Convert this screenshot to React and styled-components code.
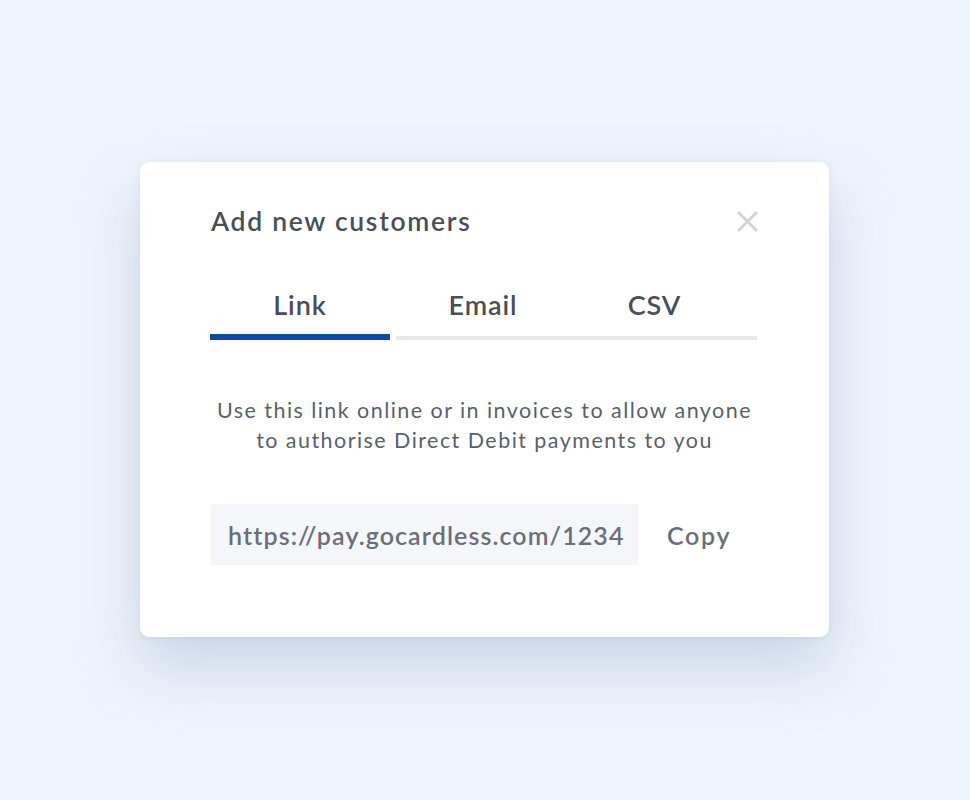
import React, { useState } from "react";
import styled, { createGlobalStyle } from "styled-components";

const Global = createGlobalStyle`
  html, body { margin: 0; padding: 0; }
  body {
    background: #eef4fc;
    font-family: Lato, "Open Sans", sans-serif;
    -webkit-font-smoothing: antialiased;
  }
`;

const Page = styled.div`
  width: 970px;
  height: 800px;
  box-sizing: border-box;
  padding-top: 162px;
  padding-left: 140px;
`;

const Card = styled.div`
  width: 689px;
  height: 475px;
  box-sizing: border-box;
  background: #ffffff;
  border-radius: 9px;
  box-shadow: 0 30px 60px rgba(160, 175, 205, 0.45), 0 2px 6px rgba(170, 180, 200, 0.2);
  padding: 42px 71px 0 71px;
  display: flex;
  flex-direction: column;
`;

const Header = styled.div`
  display: flex;
  align-items: center;
  justify-content: space-between;
  height: 34px;
`;

const Title = styled.h2`
  margin: 0;
  font-size: 26.5px;
  font-weight: 600;
  color: #4a4f57;
  letter-spacing: 1.7px;
`;

const Close = styled.button`
  border: 0;
  background: none;
  padding: 0;
  width: 21px;
  height: 21px;
  margin-right: 0;
  display: flex;
  cursor: pointer;
`;

const Tabs = styled.div`
  display: flex;
  align-items: flex-end;
  margin-top: 50px;
  margin-left: -1px;
`;

const Tab = styled.button`
  border: 0;
  background: none;
  font-family: inherit;
  font-size: 27px;
  line-height: 34px;
  font-weight: 600;
  letter-spacing: 0.9px;
  color: #4a4f57;
  width: ${(p) => p.$w}px;
  margin-left: ${(p) => p.$ml || 0}px;
  padding: 0 ${(p) => p.$pr || 0}px ${(p) => (p.$active ? 12 : 14)}px 0;
  box-sizing: content-box;
  border-bottom: ${(p) => (p.$active ? "6px solid #0a4ca8" : "4px solid #e6e7ec")};
  text-align: center;
  cursor: pointer;
`;

const Description = styled.p`
  margin: 55px 0 0 0;
  text-align: center;
  font-size: 21.5px;
  line-height: 30px;
  letter-spacing: 1.45px;
  color: #5a5f68;
  font-weight: 400;
`;

const LinkRow = styled.div`
  display: flex;
  align-items: center;
  margin-top: 49px;
`;

const UrlBox = styled.div`
  width: 427px;
  height: 61px;
  box-sizing: border-box;
  background: #f4f6f9;
  padding-left: 17px;
  display: flex;
  align-items: center;
  font-size: 25px;
  font-weight: 600;
  letter-spacing: 1.1px;
  color: #6a6f78;
  white-space: nowrap;
`;

const CopyButton = styled.button`
  border: 0;
  background: none;
  font-family: inherit;
  font-size: 25px;
  font-weight: 600;
  letter-spacing: 1.7px;
  color: #6a6f78;
  margin-left: 29px;
  padding: 0;
  cursor: pointer;
`;

const tabs = [
  { label: "Link", w: 180 },
  { label: "Email", w: 174, ml: 6 },
  { label: "CSV", w: 169, pr: 18 },
];

export default function App() {
  const [active, setActive] = useState("Link");
  return (
    <>
      <Global />
      <Page>
        <Card>
          <Header>
            <Title>Add new customers</Title>
            <Close aria-label="Close">
              <svg width="21" height="21" viewBox="0 0 21 21">
                <path d="M2 2 L19 19 M19 2 L2 19" stroke="#cfd2d8" strokeWidth="3" strokeLinecap="round" />
              </svg>
            </Close>
          </Header>
          <Tabs>
            {tabs.map((t) => (
              <Tab
                key={t.label}
                $w={t.w}
                $ml={t.ml}
                $pr={t.pr}
                $active={active === t.label}
                onClick={() => setActive(t.label)}
              >
                {t.label}
              </Tab>
            ))}
          </Tabs>
          <Description>
            Use this link online or in invoices to allow anyone
            <br />
            to authorise Direct Debit payments to you
          </Description>
          <LinkRow>
            <UrlBox>https://pay.gocardless.com/1234</UrlBox>
            <CopyButton>Copy</CopyButton>
          </LinkRow>
        </Card>
      </Page>
    </>
  );
}
